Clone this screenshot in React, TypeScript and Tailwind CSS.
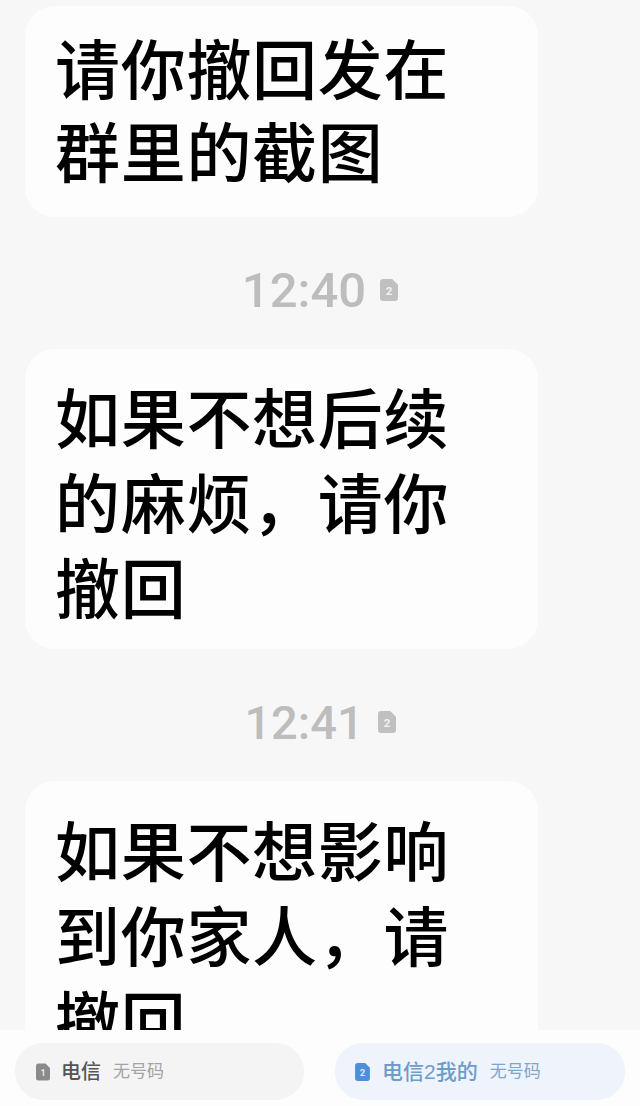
const cjk = "font-['Liberation_Sans','Noto_Sans_CJK_SC',sans-serif]";

function SimIcon({ n, className }: { n: number; className: string }) {
  return (
    <svg viewBox="0 0 14 17" className={className}>
      <path d="M2.500 0H9.500L14 4.500V14.500A2.500 2.500 0 0 1 11.500 17h-9A2.500 2.500 0 0 1 0 14.500v-12A2.500 2.500 0 0 1 2.500 0Z" fill="currentColor" />
      <text x="7" y="12.500" textAnchor="middle" fontSize="9" fontWeight="700" fill="#ffffff" fillOpacity="0.8" fontFamily="Roboto, sans-serif">
        {n}
      </text>
    </svg>
  );
}

function Bubble({ lines, className }: { lines: string[]; className: string }) {
  return (
    <div className={`ml-[25px] w-[513px] bg-[#fdfdfd] rounded-[30px] pl-[30px] ${className}`}>
      {lines.map((line) => (
        <div key={line} className={`text-[65px] font-medium text-black whitespace-nowrap tracking-[0.7px] ${cjk}`}>
          {line}
        </div>
      ))}
    </div>
  );
}

function Time({ value, size }: { value: string; size: string }) {
  return (
    <div className="h-[132px] pt-[14px] flex items-center justify-center gap-[14px] text-[#bdbdbd]">
      <span className={`${size} leading-none font-medium font-['Roboto',sans-serif]`}>{value}</span>
      <SimIcon n={2} className="w-[18px] h-[22px] text-[#c0c0c0]" />
    </div>
  );
}

export default function App() {
  return (
    <div className="w-[640px] h-[1106px] flex flex-col bg-[#f7f7f7] overflow-hidden">
      <div className="flex-1 min-h-0 overflow-hidden pt-[6px]">
        <Bubble lines={["请你撤回发在", "群里的截图"]} className="pt-[24px] pb-[21px] leading-[83px]" />
        <Time value="12:40" size="text-[49px]" />
        <Bubble lines={["如果不想后续", "的麻烦，请你", "撤回"]} className="pt-[29px] pb-[16px] leading-[85px]" />
        <Time value="12:41" size="text-[47px]" />
        <Bubble lines={["如果不想影响", "到你家人，请", "撤回"]} className="pt-[30px] leading-[85px]" />
      </div>
      <div className={`h-[76px] shrink-0 bg-[#fdfdfd] flex items-start justify-between pl-[15px] pr-[15px] pt-[13px] font-medium ${cjk}`}>
        <div className="w-[289px] h-[57px] rounded-[28px] bg-[#f4f4f5] flex items-center pl-[21px]">
          <SimIcon n={1} className="w-[14px] h-[18px] text-[#8a8a8a]" />
          <span className="ml-[11px] text-[20px] text-[#555555]">电信</span>
          <span className="ml-[12px] text-[17px] font-normal text-[#a3a3a3]">无号码</span>
        </div>
        <div className="w-[290px] h-[57px] rounded-[28px] bg-[#eef3fc] flex items-center pl-[20px]">
          <SimIcon n={2} className="w-[15px] h-[18px] text-[#4d90d9]" />
          <span className="ml-[12px] text-[21px] text-[#6d9cc9]">电信2我的</span>
          <span className="ml-[12px] text-[17px] font-normal text-[#7ea6cc]">无号码</span>
        </div>
      </div>
    </div>
  );
}
